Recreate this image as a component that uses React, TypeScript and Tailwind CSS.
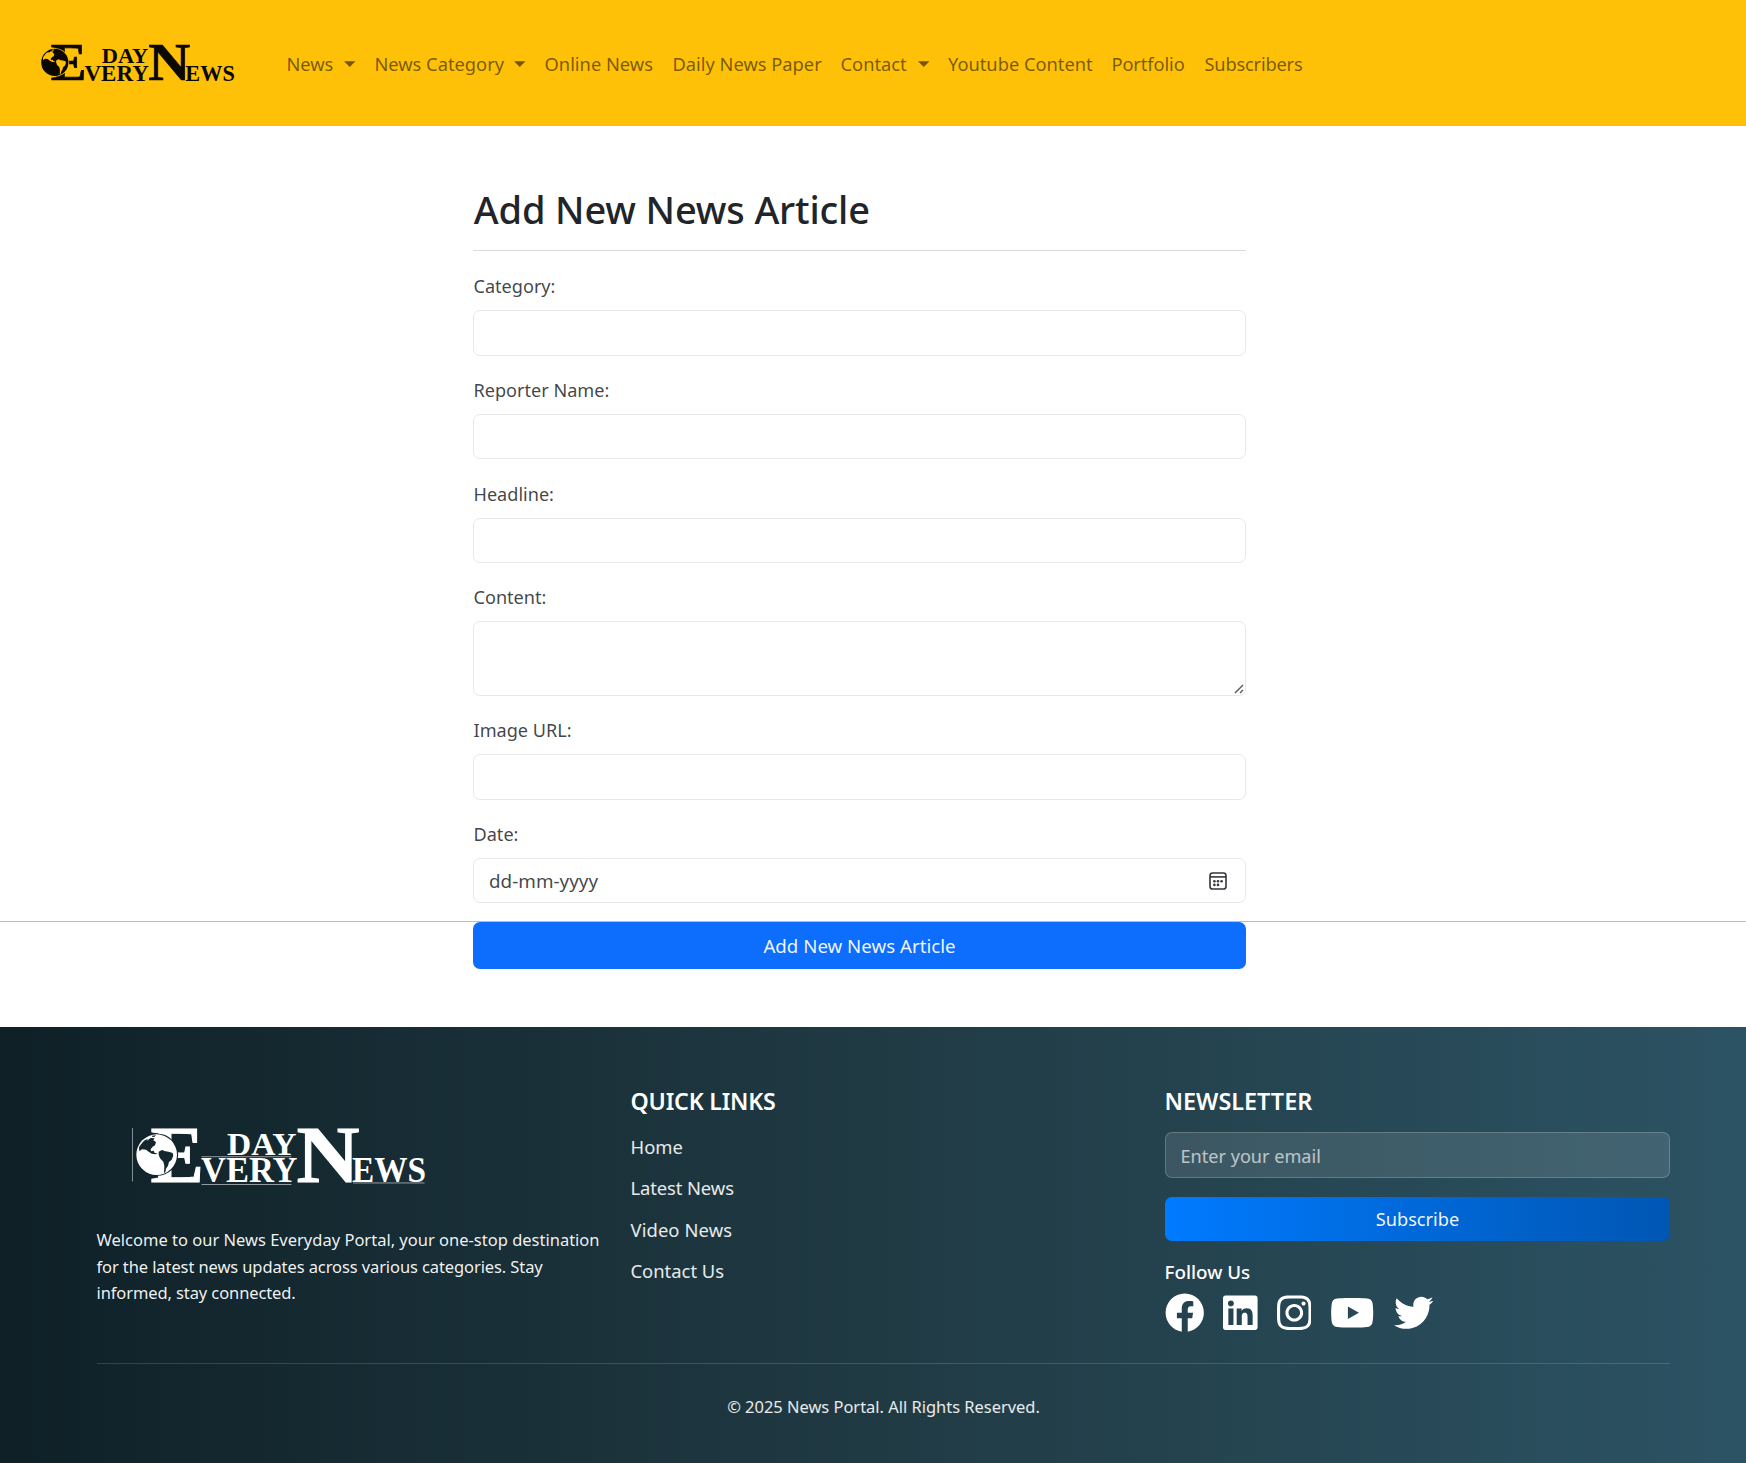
import { FaFacebook, FaInstagram, FaLinkedin, FaTwitter, FaYoutube } from "react-icons/fa";

type LogoProps = { ink: string; ground: string; rules?: boolean; className: string };

function Logo({ ink, ground, rules, className }: LogoProps) {
  return (
    <svg viewBox="0 0 300 62" className={`overflow-visible ${className}`} fill={ink} role="img" aria-label="Everyday News">
      <g fontFamily="'Liberation Serif', serif" fontWeight="700">
        <text x="20.5" y="55.6" fontSize="80.5" textLength="53.5" lengthAdjust="spacingAndGlyphs" stroke={ink} strokeWidth="1">E</text>
        <text x="97" y="29.3" fontSize="32.5" textLength="69.5" lengthAdjust="spacingAndGlyphs">DAY</text>
        <text x="71" y="56" fontSize="35" textLength="96.5" lengthAdjust="spacingAndGlyphs">VERY</text>
        <text x="166.5" y="55.6" fontSize="80.5" textLength="63" lengthAdjust="spacingAndGlyphs" stroke={ink} strokeWidth="1">N</text>
        <text x="222" y="56" fontSize="35" textLength="74" lengthAdjust="spacingAndGlyphs">EWS</text>
      </g>
      {rules && (
        <g opacity="0.6">
          <rect x="2" y="2" width="0.8" height="53.5" />
          <rect x="71.5" y="30.3" width="90" height="0.9" />
          <rect x="71.5" y="58" width="90" height="0.9" />
          <rect x="223" y="56.5" width="71.5" height="0.9" />
        </g>
      )}
      <g transform="translate(-10 -16) scale(0.3333)">
        <circle cx="111" cy="134" r="63.5" fill={ground} />
        <circle cx="110" cy="134" r="61" />
        <path
          d="M62 104 L72 92 L84 86 L80 93 L92 84 L104 85 L100 91 L108 96 L105 106 L98 110 L92 118 L93 124 L101 122 L104 129 L112 130 L108 133 L95 131 L86 125 L78 119 L66 118 L58 124 L57 112 Z"
          fill={ground}
        />
        <path
          d="M116 125 L126 120 L136 124 L146 125 L158 129 L160 137 L155 149 L147 156 L144 167 L138 176 L136 187 L132 189 L133 168 L130 155 L120 145 L116 134 Z"
          fill={ground}
        />
        <path d="M96 77 L108 76 L104 80 L97 81 Z" fill={ground} />
      </g>
    </svg>
  );
}

function Caret() {
  return (
    <svg viewBox="0 0 12 6" className="mt-[-1px] h-[6px] w-[11.5px]" fill="currentColor">
      <path d="M0 0h12L6 6z" />
    </svg>
  );
}

const navItems = [
  { label: "News", box: "w-[88px]", menu: true },
  { label: "News Category", box: "w-[170.2px]", menu: true },
  { label: "Online News", box: "w-[127.9px]" },
  { label: "Daily News Paper", box: "w-[168.1px]" },
  { label: "Contact", box: "w-[107.4px]", menu: true },
  { label: "Youtube Content", box: "w-[163.5px]" },
  { label: "Portfolio", box: "w-[93px] tracking-[-0.1px]" },
  { label: "Subscribers", box: "w-[110px] tracking-[-0.2px]" },
];

function Header() {
  return (
    <header className="flex h-[126px] bg-[#ffc107] pl-[36.6px]">
      <div className="w-[249.8px] shrink-0 pt-[43px]">
        <Logo ink="#0a0800" ground="#ffc107" className="h-[42px] w-[200.5px]" />
      </div>
      <nav className="flex pt-[50px] text-[18.3px] leading-[28px] text-black/55">
        {navItems.map((item) => (
          <a key={item.label} className={`flex h-[28px] shrink-0 items-center justify-between pr-[18.8px] whitespace-nowrap ${item.box}`}>
            {item.label}
            {item.menu && <Caret />}
          </a>
        ))}
      </nav>
    </header>
  );
}

type FieldProps = { label: string; block: string; control: string; children?: React.ReactNode };

function Field({ label, block, control, children }: FieldProps) {
  return (
    <div className={block}>
      <label className="mb-[10px] block pl-[0.5px] text-[18.1px] leading-[28px] text-[#212529]/85">{label}</label>
      <div className={`rounded-[7px] border border-[#e6e8ea] ${control}`}>{children}</div>
    </div>
  );
}

function CalendarIcon() {
  return (
    <svg viewBox="0 0 18 18" className="h-[18px] w-[18px]" fill="none" stroke="#33363a" strokeWidth="1.6">
      <rect x="1" y="1" width="16" height="16" rx="2.6" />
      <path d="M1 4.9h16" />
      <g fill="#33363a" stroke="none">
        <circle cx="5.4" cy="9.3" r="1.3" />
        <circle cx="9" cy="9.3" r="1.3" />
        <circle cx="12.6" cy="9.3" r="1.3" />
        <circle cx="5.4" cy="12.9" r="1.3" />
        <circle cx="9" cy="12.9" r="1.3" />
      </g>
    </svg>
  );
}

function ArticleForm() {
  return (
    <main className="h-[901px] pt-[59px]">
      <section className="ml-[473px] h-[736px] w-[773px]">
        <h1 className="h-[48px] pl-[0.8px] text-[38px] leading-[48px] font-medium tracking-[-0.15px] whitespace-nowrap text-[#212529]">
          Add New News Article
        </h1>
        <hr className="mt-[17px] mb-[21px] border-t border-[#d9dadb]" />
        <Field label="Category:" block="h-[104px]" control="h-[46px]" />
        <Field label="Reporter Name:" block="h-[104px]" control="h-[45px]" />
        <Field label="Headline:" block="h-[103px]" control="h-[45px]" />
        <Field label="Content:" block="h-[133px]" control="flex h-[75px] items-end justify-end">
          <svg viewBox="0 0 10 10" className="mr-[1px] mb-[1px] h-[10px] w-[10px]" stroke="#55585b" strokeWidth="1.4">
            <path d="M1 9 9 1M6 9 9 6" />
          </svg>
        </Field>
        <Field label="Image URL:" block="h-[104px]" control="h-[46px]" />
        <Field label="Date:" block="h-[83px]" control="flex h-[45px] items-center justify-between pr-[18.5px] pl-[15px]">
          <span className="text-[18.8px] leading-[28px] tracking-[0.05px] text-[#212529]/85">dd-mm-yyyy</span>
          <CalendarIcon />
        </Field>
      </section>
      <hr className="border-t border-[#bcbdbe]" />
      <button className="ml-[473px] block h-[47px] w-[773px] rounded-[7px] bg-[#0d6efd] pt-[1px] text-[18.7px] leading-[28px] text-white/95">
        Add New News Article
      </button>
    </main>
  );
}

function Footer() {
  return (
    <footer className="h-[436px] bg-[linear-gradient(to_right,#0f2027,#203a43,#2c5364)] pt-[58px] pl-[96.5px] text-white">
      <div className="grid h-[278px] w-[1573px] grid-cols-3 gap-[29px]">
        <div>
          <Logo ink="#ffffff" ground="#14272e" rules className="mt-[41px] ml-[33.5px] h-[62px] w-[300px]" />
          <p className="mt-[39px] text-[16.5px] leading-[26.5px] whitespace-nowrap text-white/95">
            Welcome to our News Everyday Portal, your one-stop destination
            <br />
            <span className="tracking-[-0.1px]">for the latest news updates across various categories. Stay</span>
            <br />
            <span className="tracking-[-0.1px]">informed, stay connected.</span>
          </p>
        </div>
        <div>
          <h2 className="text-[23.2px] leading-[32px] font-semibold tracking-[-0.2px]">QUICK LINKS</h2>
          <ul className="mt-[9px] text-[18.4px] leading-[41.3px] text-white/90">
            <li>Home</li>
            <li className="tracking-[-0.1px]">Latest News</li>
            <li className="tracking-[0.1px]">Video News</li>
            <li>Contact Us</li>
          </ul>
        </div>
        <div>
          <h2 className="text-[23.4px] leading-[32px] font-semibold">NEWSLETTER</h2>
          <div className="mt-[15px] flex h-[46px] items-center rounded-[7px] border border-white/20 bg-[#ffffff1c] pt-[1px] pl-[15px] text-[18.1px] leading-[28px] text-white/65">
            Enter your email
          </div>
          <button className="mt-[19px] block h-[44px] w-full rounded-[7px] bg-[linear-gradient(to_right,#007bff,#0056b3)] pl-[1px] text-[18.2px] leading-[28px] text-white/95">
            Subscribe
          </button>
          <h3 className="mt-[17px] text-[18.8px] leading-[28px] font-medium">Follow Us</h3>
          <div className="mt-[7px] flex gap-[19px] text-[39.5px]">
            <FaFacebook />
            <FaLinkedin className="w-[34.6px]" />
            <FaInstagram className="w-[34.6px]" />
            <FaYoutube className="w-[44.4px]" />
            <FaTwitter />
          </div>
        </div>
      </div>
      <hr className="w-[1573px] border-t border-white/15" />
      <p className="mt-[30px] w-[1573px] pl-[1px] text-center text-[16.45px] leading-[26px] text-white/90">© 2025 News Portal. All Rights Reserved.</p>
    </footer>
  );
}

export default function App() {
  return (
    <div className="h-[1463px] w-[1746px] overflow-hidden bg-white font-['Noto_Sans','Open_Sans',sans-serif]">
      <Header />
      <ArticleForm />
      <Footer />
    </div>
  );
}
